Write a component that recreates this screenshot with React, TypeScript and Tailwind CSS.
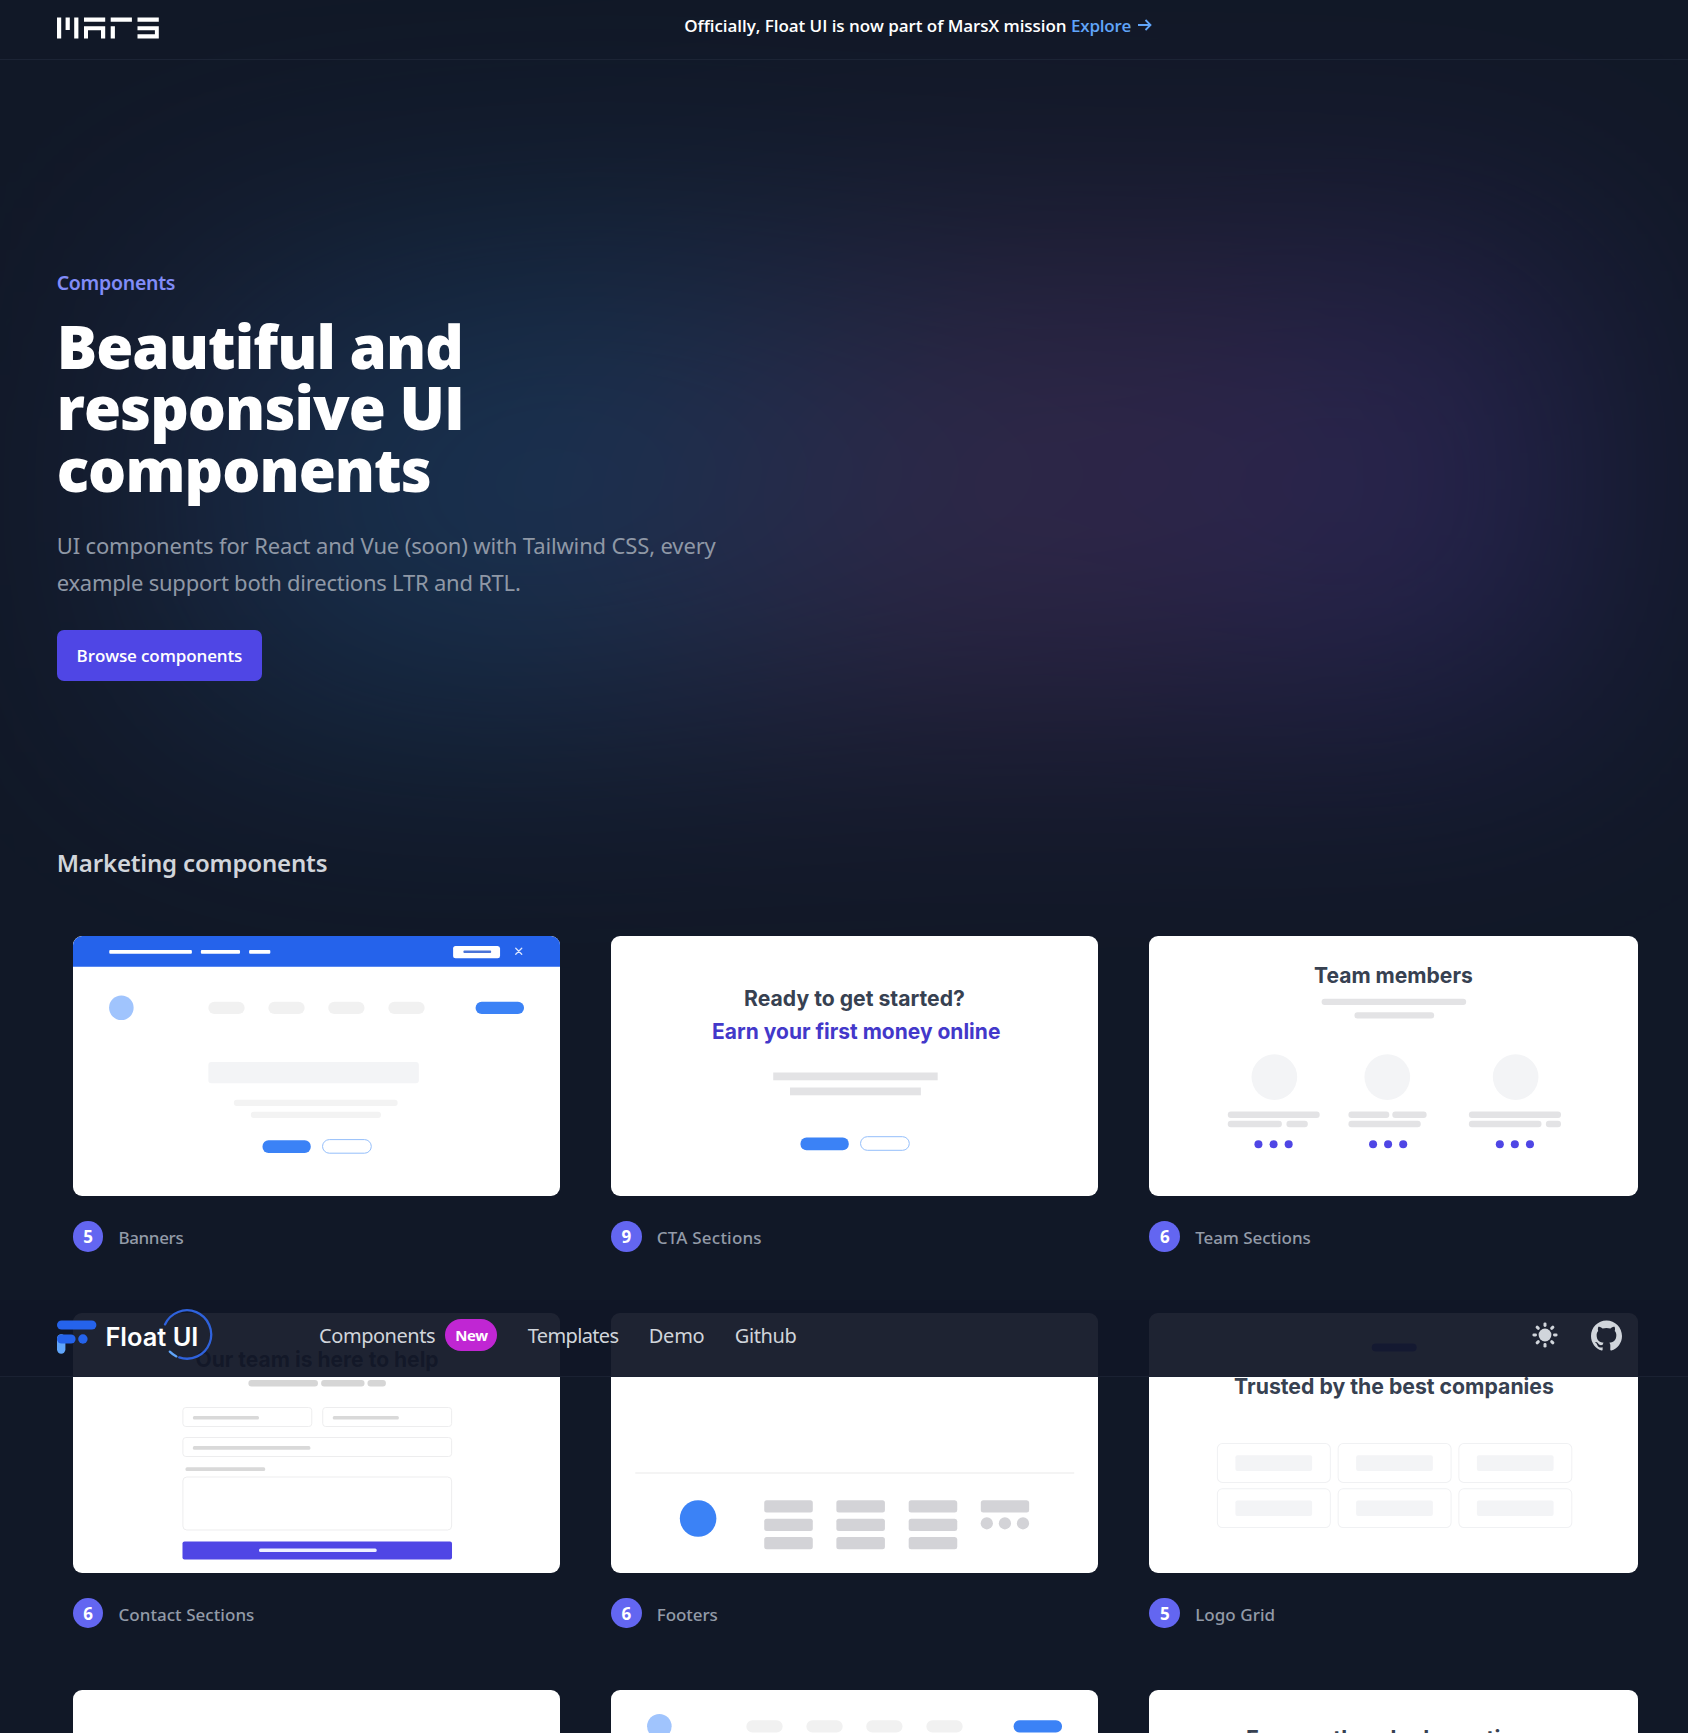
import type { ReactNode } from "react";
import { SiGithub } from "react-icons/si";

type BarProps = { x: number; y: number; w: number; h: number; r?: number; fill?: string };

const Bar = ({ x, y, w, h, r = 3, fill = "#e3e3e5" }: BarProps) => (
  <rect x={x} y={y} width={w} height={h} rx={r} fill={fill} />
);

const Outline = ({ x, y, w, h, r = 3, stroke = "#ededee" }: Omit<BarProps, "fill"> & { stroke?: string }) => (
  <rect x={x} y={y} width={w} height={h} rx={r} fill="#ffffff" stroke={stroke} />
);

const Title = ({ x, y, w, fill = "#374151", children }: { x: number; y: number; w: number; fill?: string; children: string }) => (
  <text
    x={x}
    y={y}
    textLength={w}
    lengthAdjust="spacingAndGlyphs"
    fill={fill}
    className="font-['Inter',sans-serif] text-[21.6px] font-bold"
  >
    {children}
  </text>
);

const Thumb = ({ children }: { children?: ReactNode }) => (
  <svg viewBox="0 -0.7 488 260" className="block h-[260px] w-full rounded-[9px] bg-white" preserveAspectRatio="none">
    {children}
  </svg>
);

const SiteHeader = ({ y }: { y: number }) => (
  <g>
    <circle cx={48.4} cy={y} r={12.3} fill="#a0c4fd" />
    {[135.5, 195.6, 255.5, 315.7].map((x) => (
      <Bar key={x} x={x} y={y - 6.1} w={36.3} h={12.3} r={6.1} fill="#f1f1f1" />
    ))}
    <Bar x={403} y={y - 6.1} w={48.5} h={12.3} r={6.1} fill="#3b82f6" />
  </g>
);

const Buttons = ({ y }: { y: number }) => (
  <g>
    <Bar x={189.7} y={y} w={48.3} h={12.8} r={6} fill="#3b82f6" />
    <Outline x={249.8} y={y - 0.7} w={48.8} h={13.6} r={6.8} stroke="#94befa" />
  </g>
);

const BannersThumb = () => (
  <Thumb>
    <path d="M0 30V8.3a9 9 0 0 1 9-9h470a9 9 0 0 1 9 9V30z" fill="#2563eb" />
    <Bar x={36.3} y={13.3} w={82.7} h={3.8} r={1} fill="#ffffff" />
    <Bar x={128} y={13.3} w={39.2} h={3.8} r={1} fill="#ffffff" />
    <Bar x={176.3} y={13.3} w={21.2} h={3.8} r={1} fill="#ffffff" />
    <Bar x={380.5} y={9.3} w={47} h={12.3} r={2.5} fill="#ffffff" />
    <Bar x={390.8} y={13.7} w={27.8} h={2.5} r={1} fill="#4a74d8" />
    <path d="M443.2 11.6l6 6m0-6l-6 6" stroke="#dbe6ff" strokeWidth={1.3} strokeLinecap="round" />
    <SiteHeader y={71.1} />
    <Bar x={135.5} y={125.4} w={210.7} h={21.2} r={3} fill="#f3f4f6" />
    <Bar x={161} y={163} w={164} h={6.3} fill="#f3f3f3" />
    <Bar x={178} y={175} w={130.3} h={6.3} fill="#f3f3f3" />
    <Buttons y={203.6} />
  </Thumb>
);

const CtaThumb = () => (
  <Thumb>
    <Title x={133.2} y={69.6} w={221}>Ready to get started?</Title>
    <Title x={101.2} y={102.5} w={288.6} fill="#4338ca">Earn your first money online</Title>
    <Bar x={162.4} y={135.8} w={164.6} h={7.8} r={0} />
    <Bar x={179.2} y={150.8} w={131} h={7.8} r={0} />
    <Buttons y={200.7} />
  </Thumb>
);

const TeamThumb = () => (
  <Thumb>
    <Title x={164.8} y={46.8} w={158.6}>Team members</Title>
    <Bar x={172.4} y={62} w={144.4} h={6.3} />
    <Bar x={205.2} y={75.5} w={79.6} h={6.3} />
    <circle cx={125.2} cy={140.4} r={22.8} fill="#f3f4f6" />
    <circle cx={238} cy={140.4} r={22.8} fill="#f3f4f6" />
    <circle cx={366.2} cy={140.4} r={22.8} fill="#f3f4f6" />
    <Bar x={78.7} y={174.9} w={91.8} h={6.4} />
    <Bar x={78.7} y={184.1} w={54} h={6.4} />
    <Bar x={137.3} y={184.1} w={21.3} h={6.4} />
    <Bar x={199.2} y={174.9} w={40.8} h={6.4} />
    <Bar x={243} y={174.9} w={34.3} h={6.4} />
    <Bar x={199.2} y={184.1} w={72.2} h={6.4} />
    <Bar x={319.5} y={174.9} w={92} h={6.4} />
    <Bar x={319.5} y={184.1} w={72.5} h={6.4} />
    <Bar x={396.4} y={184.1} w={15.1} h={6.4} />
    {[109.3, 124.4, 139.5, 223.8, 238.8, 253.9, 350.4, 365.4, 380.5].map((cx) => (
      <circle key={cx} cx={cx} cy={207.6} r={4} fill="#4f46e5" />
    ))}
  </Thumb>
);

const ContactThumb = () => (
  <Thumb>
    <Title x={122.6} y={53} w={243.4}>Our team is here to help</Title>
    <Bar x={175.6} y={66.2} w={69.6} h={6.6} fill="#d6d6d6" />
    <Bar x={248.4} y={66.2} w={43.4} h={6.6} fill="#d6d6d6" />
    <Bar x={294.8} y={66.2} w={18.4} h={6.6} fill="#d6d6d6" />
    <Outline x={110} y={93.8} w={129} h={19} />
    <Outline x={250} y={93.8} w={129} h={19} />
    <Bar x={120} y={102.2} w={66.2} h={3.6} r={1.5} fill="#d9d9d9" />
    <Bar x={260} y={102.2} w={66.2} h={3.6} r={1.5} fill="#d9d9d9" />
    <Outline x={110} y={123.8} w={269} h={19} />
    <Bar x={120} y={132.4} w={117.6} h={3.6} r={1.5} fill="#d9d9d9" />
    <Bar x={112.6} y={153.6} w={79.8} h={3.6} r={1.5} fill="#d9d9d9" />
    <Outline x={110} y={163.3} w={269} h={53} r={4} />
    <Bar x={109.6} y={227.8} w={269.8} h={18} r={2} fill="#4f46e5" />
    <Bar x={186.2} y={234.8} w={117.8} h={3.4} r={1.5} fill="#eef0ff" />
  </Thumb>
);

const FootersThumb = () => (
  <Thumb>
    <path d="M24.3 159.2h439.4" stroke="#f0f0f1" strokeWidth={1.5} />
    <circle cx={87.2} cy={204.8} r={18.3} fill="#3b82f6" />
    {[153.4, 225.6, 298].map((x) =>
      [186.6, 205, 223.2].map((y) => <Bar key={`${x}-${y}`} x={x} y={y} w={48.6} h={12.3} r={2.5} fill="#d3d3d7" />),
    )}
    <Bar x={370.2} y={186.6} w={48.4} h={12.3} r={2.5} fill="#d3d3d7" />
    {[376.2, 394.3, 412.4].map((cx) => (
      <circle key={cx} cx={cx} cy={209.6} r={6.1} fill="#d3d3d7" />
    ))}
  </Thumb>
);

const LogoGridThumb = () => (
  <Thumb>
    <Bar x={222.4} y={29.8} w={45} h={8} r={4} fill="#4f46e5" />
    <Title x={85} y={80} w={319.4}>Trusted by the best companies</Title>
    {[129.6, 174.8].map((y) =>
      [68, 188.6, 309.2].map((x) => (
        <g key={`${x}-${y}`}>
          <Outline x={x + 0.3} y={y + 0.3} w={112.8} h={38.8} r={5} stroke="#f0f1f3" />
          <Bar x={x + 18.3} y={y + 12} w={76.6} h={15.6} r={2} fill="#f3f4f6" />
        </g>
      )),
    )}
  </Thumb>
);

const HeroThumb = () => (
  <Thumb>
    <SiteHeader y={35.6} />
  </Thumb>
);

const FaqThumb = () => (
  <Thumb>
    <Title x={97} y={55.6} w={293}>Frequently asked questions</Title>
  </Thumb>
);

const Card = ({ count, name, tracking = "", children }: { count?: number; name?: string; tracking?: string; children: ReactNode }) => (
  <div>
    {children}
    {name && (
      <div className="mt-[24.8px] flex items-center gap-[15px]">
        <span className="flex size-[30.8px] items-center justify-center rounded-full bg-[#6366f1] pt-px font-['Open_Sans',sans-serif] text-[17px] font-bold text-white">
          {count}
        </span>
        <span className={`pt-[3px] text-[17px] font-medium text-[#939ba8] ${tracking}`}>{name}</span>
      </div>
    )}
  </div>
);

const MarsLogo = () => (
  <svg width={103} height={22} viewBox="0 0 103 22" fill="#ffffff">
    <path d="M0 .5h4.2v21H0zM8.6.5h4.2V13H8.6zM17.2.5h4.2v21h-4.2z" />
    <path d="M27 .5h21.2v4.2H27zM27 9.2h21.2v12.3H44v-8.2H31v8.2h-4z" />
    <path d="M53.7.5h21.2v4.2H53.7zM53.7 9.2h4.2v12.3h-4.2z" />
    <path d="M80.5.5h21.3v4.2H80.5zM80.5 9.2h21.3v12.3H80.5v-4.2h17.4v-4h-17.4z" />
  </svg>
);

const FloatLogo = () => (
  <svg width={160} height={54} viewBox="0 0 160 54" fill="none">
    <path d="M4.2 31.5v11" stroke="#60a5fa" strokeWidth={8.4} strokeLinecap="round" />
    <rect x={0} y={13.4} width={39.4} height={9.2} rx={4.6} fill="#2563eb" />
    <rect x={0} y={27.4} width={18.6} height={9.2} rx={4.6} fill="#2563eb" />
    <circle cx={25.9} cy={32} r={4.7} fill="#2563eb" />
    <path d="M108 17.4A24.2 24.2 0 1 1 122.2 50.4" stroke="#2f62dc" strokeWidth={2.3} strokeLinecap="round" />
    <path d="M112.8 44.6Q115.6 47.4 119.4 49.4" stroke="#60a5fa" strokeWidth={2.3} strokeLinecap="round" />
    <text x={48.4} y={38.7} textLength={93} lengthAdjust="spacingAndGlyphs" fill="#ffffff" className="font-['Inter',sans-serif] text-[25px] font-semibold">
      Float UI
    </text>
  </svg>
);

const Sun = () => (
  <svg width={26} height={26} viewBox="-13 -13 26 26" fill="#d1d5db">
    <circle r={6.4} />
    {[0, 45, 90, 135, 180, 225, 270, 315].map((a) => (
      <rect key={a} x={-1.5} y={-12.6} width={3} height={4.6} rx={1.4} transform={`rotate(${a})`} />
    ))}
  </svg>
);

const NavBar = () => (
  <nav className="absolute inset-x-0 top-[1300px] z-10 flex h-[77.4px] items-start border-b border-[#1a2132] bg-[#111626]/[0.945] pl-[56.7px] pr-[66.3px]">
    <div className="mt-[7px] w-[262.4px]">
      <FloatLogo />
    </div>
    <ul className="flex flex-1 items-center gap-[30.4px] pt-[20px] text-[20px] leading-[31px] text-[#d1d5db]">
      <li className="flex items-center gap-[10.3px]">
        <span className="tracking-[-0.023em]">Components</span>
        <span className="-mt-px flex h-[31.5px] w-[52px] items-center justify-center rounded-full bg-[#c026d3] font-['Open_Sans',sans-serif] text-[15px] font-bold tracking-[-0.03em] text-white">
          New
        </span>
      </li>
      <li className="tracking-[-0.033em]">Templates</li>
      <li className="tracking-[-0.012em]">Demo</li>
      <li className="tracking-[-0.02em]">Github</li>
    </ul>
    <div className="flex items-center gap-[33px] pt-[19.5px] text-[#d1d5db]">
      <Sun />
      <SiGithub className="size-[31px]" />
    </div>
  </nav>
);

export default function App() {
  return (
    <div className="relative h-[1733px] overflow-hidden bg-[#111827] font-['Noto_Sans',sans-serif]">
      <div className="pointer-events-none absolute left-[130px] top-[250px] h-[460px] w-[1450px] bg-[linear-gradient(106.89deg,rgba(99,132,240,0.2)_8%,rgba(40,150,235,0.4)_26%,rgba(232,121,249,0.27)_60%,rgba(79,70,229,0.44)_108%)] opacity-[0.57] blur-[132px]" />

      <div className="relative">
        <header className="flex h-[59.5px] items-center border-b border-[#1c2435] px-[56.5px]">
          <div className="-mt-[3px] w-[102px]">
            <MarsLogo />
          </div>
          <p className="-mt-[8px] ml-[46px] flex flex-1 items-center justify-center whitespace-pre font-['Open_Sans',sans-serif] text-[17px] font-semibold tracking-[-0.003em] text-white">
            Officially, Float UI is now part of MarsX mission{" "}
            <span className="flex items-center gap-[6.5px] tracking-[-0.012em] text-[#60a5fa]">
              Explore
              <svg width={14} height={12} viewBox="0 0 14 12" fill="none" stroke="currentColor" strokeWidth={1.8} className="-mt-px">
                <path d="M0 6h12.5M7.5 1l5 5-5 5" />
              </svg>
            </span>
          </p>
        </header>

        <section className="px-[56.7px] pt-[209.5px]">
          <p className="text-[19.5px] font-semibold leading-[28px] tracking-[-0.014em] text-[#818cf8]">Components</p>
          <h1 className="mt-[18.9px] font-['Open_Sans',sans-serif] text-[60px] font-black leading-[61.4px] tracking-[-0.0155em] text-white">
            Beautiful and
            <br />
            responsive UI
            <br />
            components
          </h1>
          <p className="mt-[26.9px] text-[22px] leading-[36.6px] tracking-[-0.0065em] text-[#8f98a6]">
            UI components for React and Vue (soon) with Tailwind CSS, every
            <br />
            <span className="tracking-[-0.0105em]">example support both directions LTR and RTL.</span>
          </p>
          <button className="mt-[29.4px] flex h-[51px] w-[205.5px] items-center justify-center rounded-[7px] bg-[#4f46e5] pt-px font-['Open_Sans',sans-serif] text-[17px] font-semibold tracking-[-0.007em] text-white">
            Browse components
          </button>
        </section>

        <section className="pt-[166.2px]">
          <h2 className="px-[56.7px] text-[24px] font-semibold leading-[32px] tracking-[-0.007em] text-[#d1d5db]">
            Marketing components
          </h2>
          <div className="mt-[57.2px] grid grid-cols-[487.5px_487.5px_488.6px] gap-x-[50.9px] gap-y-[61.2px] pl-[72.6px]">
            <Card count={5} name="Banners" tracking="tracking-[-0.02em]"><BannersThumb /></Card>
            <Card count={9} name="CTA Sections" tracking="tracking-[0.012em]"><CtaThumb /></Card>
            <Card count={6} name="Team Sections" tracking="tracking-[-0.003em]"><TeamThumb /></Card>
            <Card count={6} name="Contact Sections" tracking="tracking-[0.003em]"><ContactThumb /></Card>
            <Card count={6} name="Footers" tracking="tracking-[-0.004em]"><FootersThumb /></Card>
            <Card count={5} name="Logo Grid" tracking="tracking-[0.003em]"><LogoGridThumb /></Card>
            <Card><Thumb /></Card>
            <Card><HeroThumb /></Card>
            <Card><FaqThumb /></Card>
          </div>
        </section>
      </div>

      <NavBar />
    </div>
  );
}
